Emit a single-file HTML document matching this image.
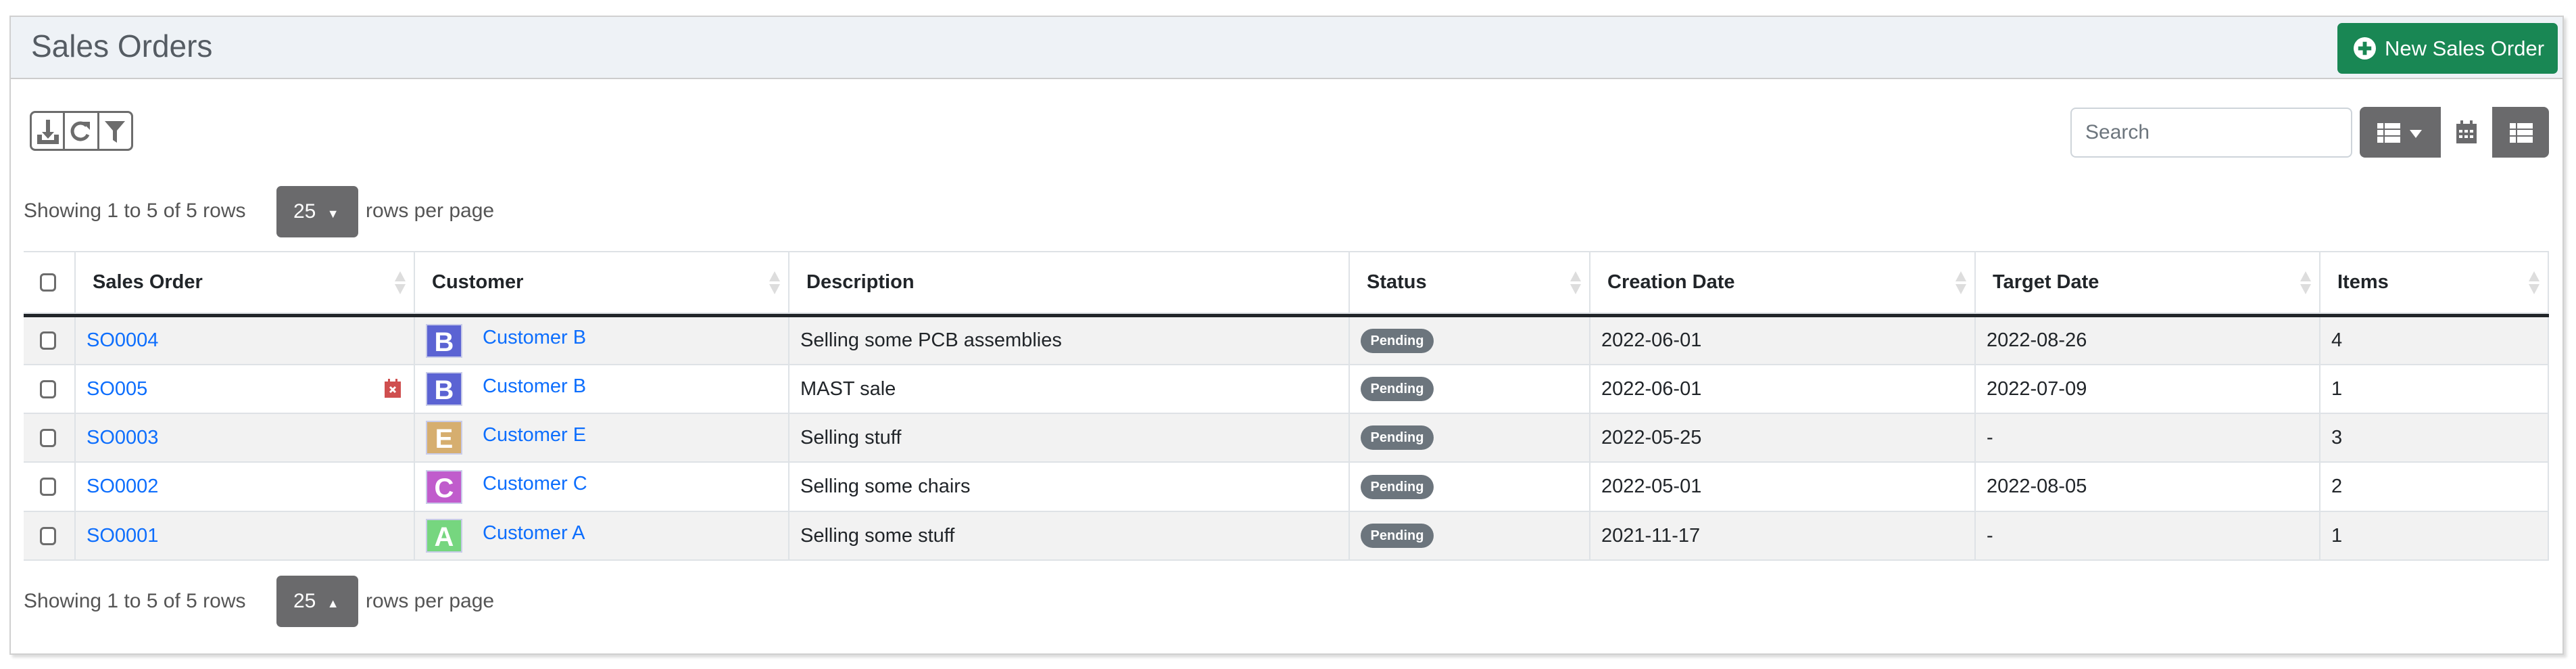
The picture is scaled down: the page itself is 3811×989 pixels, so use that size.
<!DOCTYPE html>
<html><head><meta charset="utf-8"><style>
*{box-sizing:border-box;margin:0;padding:0}
body{width:3811px;height:989px;background:#fff;font-family:"Liberation Sans",sans-serif;color:#212529;position:relative;overflow:hidden}
.a{position:absolute}
.panel{left:14px;top:23px;width:3779px;height:945px;border:2px solid #d0d0d0;box-shadow:4px 4px 4px #ddd}
.hdr{left:16px;top:25px;width:3775px;height:92px;background:#eef2f6;border-bottom:2px solid #ccc}
.title{left:46px;top:38px;font-size:46px;color:#555c63;line-height:60px}
.newbtn{left:3458px;top:34px;width:326px;height:75px;background:#198754;border-radius:7px;color:#fff;font-size:31px;line-height:75px;padding-left:70px;white-space:nowrap}
.newbtn span{position:absolute;left:24px;top:21px;width:33px;height:33px;border-radius:50%;background:#fff;line-height:0}
.newbtn svg{display:block}
.tb{left:44px;top:164px;width:153px;height:59px;border:3px solid #6c6c6c;border-radius:8px}
.tb i{position:absolute;top:0;bottom:0;width:3px;background:#6c6c6c}
.show{font-size:30px;color:#555;line-height:34px}
.pg{width:121px;height:76px;background:#6a6a6c;border-radius:7px;color:#fff;font-size:30px;line-height:76px;padding-left:25px}
.search{left:3063px;top:159px;width:417px;height:74px;border:2px solid #ced4da;border-radius:8px;font-size:30px;color:#6c757d;line-height:70px;padding-left:20px}
.grp{left:3491px;top:158px;width:280px;height:75px;background:#6a6a6c;border-radius:8px;overflow:hidden}
.cell{position:absolute;border-right:2px solid #dee2e6;border-bottom:2px solid #dee2e6;font-size:29px;display:flex;align-items:center}
.h{font-weight:bold;padding-left:25px}
.r{padding-left:16px}
a{color:#0d6efd;text-decoration:none}
.badge{background:#6c757d;color:#fff;font-weight:bold;font-size:20px;border-radius:18px;width:108px;height:36px;text-align:center;line-height:36px}
.av{width:54px;height:50px;color:#fff;font-weight:bold;font-size:40px;text-align:center;line-height:50px;border:2px solid #c8cbe8;margin-right:30px}
.cb{width:24px;height:27px;border:3px solid #6c6c6c;border-radius:6px;background:#fff}
.sort{position:absolute;right:12px;top:50%;margin-top:-17px;width:16px;height:34px}
</style></head><body>
<div class="a panel"></div>
<div class="a hdr"></div>
<div class="a title">Sales Orders</div>
<div class="a newbtn"><span><svg width="33" height="33" viewBox="0 0 34 34"><path d="M14 7h6v7h7v6h-7v7h-6v-7h-7v-6h7z" fill="#198754"/></svg></span>New Sales Order</div>

<div class="a tb"><i style="left:46px"></i><i style="left:97px"></i>
<svg class="a" style="left:6px;top:8px" width="36" height="40" viewBox="0 0 36 40"><path d="M15 2h6v18h6l-9 10-9-10h6z M2 24h7v8h18v-8h7v14H2z" fill="#6c6c6c"/></svg>
<svg class="a" style="left:56px;top:10px" width="32" height="36" viewBox="0 0 32 36"><path d="M25 9A12 12 0 1 0 27 22" stroke="#6c6c6c" stroke-width="5" fill="none"/><path d="M18 3h12v12z" fill="#6c6c6c"/></svg>
<svg class="a" style="left:106px;top:10px" width="34" height="36" viewBox="0 0 34 36"><path d="M2 2h30L20 16v18l-6-4V16z" fill="#6c6c6c"/></svg>
</div>

<div class="a show" style="left:35px;top:295px">Showing 1 to 5 of 5 rows</div>
<div class="a pg" style="left:409px;top:275px">25 <span style="font-size:18px;margin-left:8px">▼</span></div>
<div class="a show" style="left:541px;top:295px">rows per page</div>

<div class="a search">Search</div>
<div class="a grp">
<div class="a" style="left:120px;top:0;width:76px;height:75px;background:#fff"></div>
<svg class="a" style="left:26px;top:24px" width="34" height="30" viewBox="0 0 34 30"><path d="M0 0h9v8H0zM11 0h23v8H11zM0 10h9v8H0zM11 10h23v8H11zM0 20h9v9H0zM11 20h23v9H11z" fill="#fff"/></svg>
<svg class="a" style="left:74px;top:34px" width="18" height="12" viewBox="0 0 18 12"><path d="M0 0h18L9 12z" fill="#fff"/></svg>
<svg class="a" style="left:143px;top:20px" width="30" height="34" viewBox="0 0 30 34"><path d="M6 0h4v5h10V0h4v5h6v29H0V5h6z" fill="#6a6a6c"/><path d="M4 14h5v4H4zM12 14h5v4h-5zM20 14h5v4h-5zM4 22h5v4H4zM12 22h5v4h-5zM20 22h5v4h-5z" fill="#fff"/></svg>
<svg class="a" style="left:222px;top:24px" width="34" height="30" viewBox="0 0 34 30"><path d="M0 0h9v8H0zM11 0h23v8H11zM0 10h9v8H0zM11 10h23v8H11zM0 20h9v9H0zM11 20h23v9H11z" fill="#fff"/></svg>
</div>

<div class="a" style="left:35px;top:371px;width:3736px;height:458px;border-left:2px solid #dee2e6;border-top:2px solid #dee2e6"></div>
<div class="a" style="left:35px;top:464px;width:3736px;height:5px;background:#212529"></div>

<div id="t"></div>
<script>
var cols=[35,112,614,1168,1997,2353,2923,3433,3771];
var heads=["","Sales Order","Customer","Description","Status","Creation Date","Target Date","Items"];
var sort=[0,1,1,0,1,1,1,1];
var rows=[
["SO0004","B","#5b63d3","Customer B","Selling some PCB assemblies","2022-06-01","2022-08-26","4",0],
["SO005","B","#5b63d3","Customer B","MAST sale","2022-06-01","2022-07-09","1",1],
["SO0003","E","#d6ae6f","Customer E","Selling stuff","2022-05-25","-","3",0],
["SO0002","C","#c05ccc","Customer C","Selling some chairs","2022-05-01","2022-08-05","2",0],
["SO0001","A","#76d67f","Customer A","Selling some stuff","2021-11-17","-","1",0]];
var rt=[469,540,612,684,757,829];
var h="";
function cell(i,top,ht,cls,inner,bg){h+='<div class="cell '+cls+'" style="left:'+cols[i]+'px;top:'+top+'px;width:'+(cols[i+1]-cols[i])+'px;height:'+ht+'px;background:'+bg+'">'+inner+'</div>';}
var arrow='<svg class="sort" viewBox="0 0 16 34"><path d="M8 0L16 15H0z" fill="#ddd"/><path d="M0 19h16L8 34z" fill="#ddd"/></svg>';
for(var i=0;i<8;i++){cell(i,373,91,i==0?"":"h",(i==0?'<div class="cb" style="margin-left:24px"></div>':heads[i])+(sort[i]?arrow:""),"#fff");}
for(var r=0;r<5;r++){var d=rows[r],bg=r%2==0?"#f2f2f2":"#fff",t=rt[r],ht=rt[r+1]-t;
cell(0,t,ht,"",'<div class="cb" style="margin-left:24px"></div>',bg);
cell(1,t,ht,"r",'<a>'+d[0]+'</a>'+(d[8]?'<svg style="position:absolute;right:19px;top:20px" width="24" height="28" viewBox="0 0 24 28"><path d="M5 0h3v4h8V0h3v4h5v24H0V4h5z" fill="#cf4f4f"/><path d="M8 12l8 8M16 12l-8 8" stroke="#fff" stroke-width="3"/></svg>':''),bg);
cell(2,t,ht,"r",'<div class="av" style="background:'+d[2]+'">'+d[1]+'</div><a style="margin-top:-8px">'+d[3]+'</a>',bg);
cell(3,t,ht,"r",d[4],bg);
cell(4,t,ht,"r",'<div class="badge">Pending</div>',bg);
cell(5,t,ht,"r",d[5],bg);cell(6,t,ht,"r",d[6],bg);cell(7,t,ht,"r",d[7],bg);}
document.getElementById("t").innerHTML=h;
</script>

<div class="a show" style="left:35px;top:872px">Showing 1 to 5 of 5 rows</div>
<div class="a pg" style="left:409px;top:851px">25 <span style="font-size:18px;margin-left:8px">▲</span></div>
<div class="a show" style="left:541px;top:872px">rows per page</div>
</body></html>
